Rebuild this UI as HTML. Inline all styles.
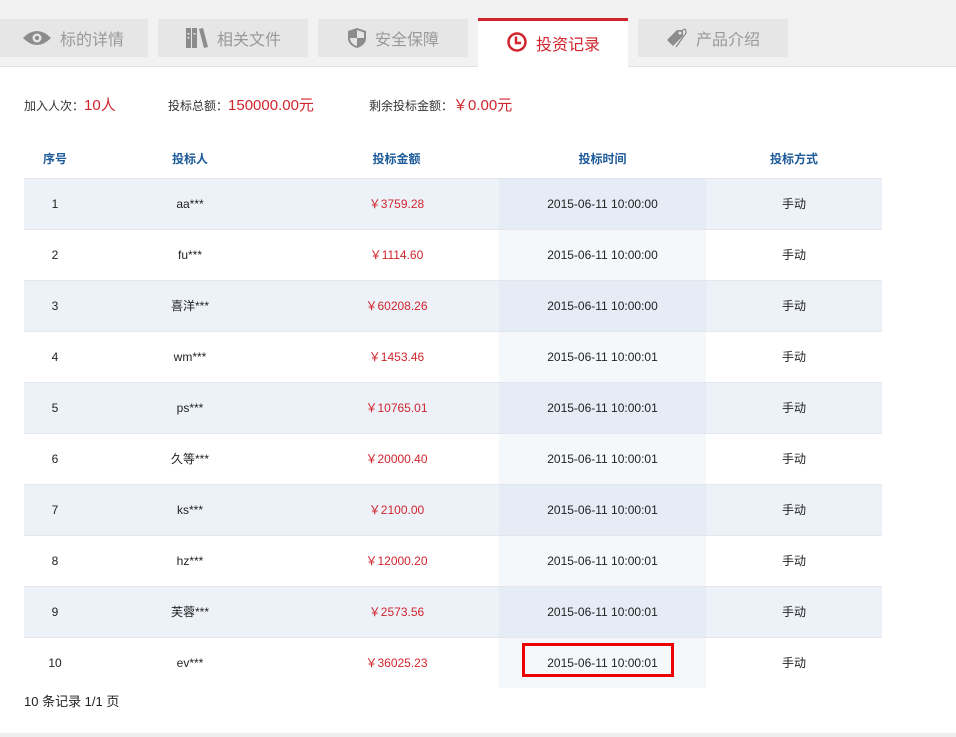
<!DOCTYPE html>
<html><head><meta charset="utf-8">
<style>
*{margin:0;padding:0;box-sizing:border-box}
body{width:956px;height:737px;background:#fff;font-family:"Liberation Sans","Noto Sans CJK SC",sans-serif;position:relative;overflow:hidden;color:#333}
.band{position:absolute;left:0;top:0;width:956px;height:67px;background:#f2f2f2;border-bottom:1px solid #e2e2e2}
.tab{position:absolute;top:19px;height:38px;width:150px;background:#e6e6e6;color:#999;font-size:16px;display:flex;align-items:center;justify-content:center;gap:8px}
.tab svg{display:block}
.tab.on{top:18px;height:50px;background:#fff;border-top:3px solid #d0252d;color:#d0252d;align-items:flex-start;padding-top:10px}
.sum{position:absolute;top:94px;font-size:12px;color:#333}
.sum b{font-weight:normal;color:#d0252d;font-size:15px}
table{position:absolute;left:24px;top:140px;border-collapse:collapse;width:858px;font-size:12px}
td,th{text-align:center;padding:0}
th{height:38px;color:#1d5a9a;font-weight:bold;font-size:12px;border-bottom:1px solid #e3e6ea}
td{height:51px;border-bottom:1px solid #e3e6ea;color:#222}
tr.o td{background:#edf2f9}
tr.o td.t{background:#e5ecf6}
tr.e td.t{background:#f5f8fb}
tr.last td{border-bottom:none}
td.m{color:#d0252d}
.box{position:absolute;left:522px;top:643px;width:152px;height:34px;border:3px solid #e00}
.foot{position:absolute;left:24px;top:691px;font-size:13px;color:#222}
.bl{position:absolute;left:0;top:733px;width:956px;height:4px;background:#eee}
</style></head><body>
<div class="band"></div>
<div class="tab" style="left:-2px"><svg width="30" height="18" viewBox="0 0 30 18"><path d="M1 9Q15 -5 29 9Q15 23 1 9Z" fill="#8c8c8c"/><circle cx="15" cy="9" r="4.5" fill="#e6e6e6"/><circle cx="15" cy="9" r="2.2" fill="#8c8c8c"/></svg>标的详情</div>
<div class="tab" style="left:158px"><svg width="24" height="22" viewBox="0 0 24 22"><rect x="1" y="1" width="5" height="20" fill="#8c8c8c"/><rect x="7" y="1" width="5" height="20" fill="#8c8c8c"/><rect x="2.5" y="6" width="2" height="1.5" fill="#e6e6e6"/><rect x="8.5" y="6" width="2" height="1.5" fill="#e6e6e6"/><rect x="2.5" y="10" width="2" height="1.5" fill="#e6e6e6"/><path d="M14 2L18 1L23 20L19 21Z" fill="#8c8c8c"/></svg>相关文件</div>
<div class="tab" style="left:318px"><svg width="20" height="22" viewBox="0 0 20 22"><path d="M10 1L19 4V11Q19 18 10 21Q1 18 1 11V4Z" fill="#8c8c8c"/><path d="M10 3L17 5.5V11H10Z M10 11H3Q3.5 17 10 19Z" fill="#e6e6e6"/></svg>安全保障</div>
<div class="tab on" style="left:478px"><svg width="22" height="22" viewBox="0 0 22 22"><circle cx="11" cy="11" r="8.5" fill="none" stroke="#d0252d" stroke-width="2.5"/><path d="M10 5.5V12H15" fill="none" stroke="#d0252d" stroke-width="2.5"/></svg>投资记录</div>
<div class="tab" style="left:638px"><svg width="22" height="22" viewBox="0 0 22 22"><path d="M1 13L11 3H17V9L7 19Z" fill="#8c8c8c"/><circle cx="14" cy="6" r="1.5" fill="#e6e6e6"/><path d="M15 5Q20 -1 20 6L10 20" fill="none" stroke="#8c8c8c" stroke-width="1.3"/></svg>产品介绍</div>

<div class="sum" style="left:24px">加入人次：<b>10人</b></div>
<div class="sum" style="left:168px">投标总额：<b>150000.00元</b></div>
<div class="sum" style="left:369px">剩余投标金额：<b>￥0.00元</b></div>

<table>
<colgroup><col style="width:62px"><col style="width:208px"><col style="width:205px"><col style="width:207px"><col style="width:176px"></colgroup>
<tr><th>序号</th><th>投标人</th><th>投标金额</th><th>投标时间</th><th>投标方式</th></tr>
<tr class="o"><td>1</td><td>aa***</td><td class="m">￥3759.28</td><td class="t">2015-06-11 10:00:00</td><td>手动</td></tr>
<tr class="e"><td>2</td><td>fu***</td><td class="m">￥1114.60</td><td class="t">2015-06-11 10:00:00</td><td>手动</td></tr>
<tr class="o"><td>3</td><td>喜洋***</td><td class="m">￥60208.26</td><td class="t">2015-06-11 10:00:00</td><td>手动</td></tr>
<tr class="e"><td>4</td><td>wm***</td><td class="m">￥1453.46</td><td class="t">2015-06-11 10:00:01</td><td>手动</td></tr>
<tr class="o"><td>5</td><td>ps***</td><td class="m">￥10765.01</td><td class="t">2015-06-11 10:00:01</td><td>手动</td></tr>
<tr class="e"><td>6</td><td>久等***</td><td class="m">￥20000.40</td><td class="t">2015-06-11 10:00:01</td><td>手动</td></tr>
<tr class="o"><td>7</td><td>ks***</td><td class="m">￥2100.00</td><td class="t">2015-06-11 10:00:01</td><td>手动</td></tr>
<tr class="e"><td>8</td><td>hz***</td><td class="m">￥12000.20</td><td class="t">2015-06-11 10:00:01</td><td>手动</td></tr>
<tr class="o"><td>9</td><td>芙蓉***</td><td class="m">￥2573.56</td><td class="t">2015-06-11 10:00:01</td><td>手动</td></tr>
<tr class="e last"><td>10</td><td>ev***</td><td class="m">￥36025.23</td><td class="t">2015-06-11 10:00:01</td><td>手动</td></tr>
</table>
<div class="box"></div>
<div class="foot">10 条记录 1/1 页</div>
<div class="bl"></div>
</body></html>
